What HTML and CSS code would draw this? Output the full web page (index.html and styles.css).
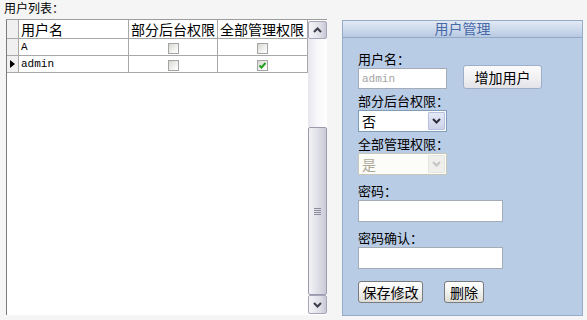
FILE: index.html
```html
<!DOCTYPE html>
<html lang="zh-CN">
<head>
    <meta charset="UTF-8">
    <title>用户管理</title>
    <link rel="stylesheet" href="styles.css">
</head>
<body>
    <div class="page">
        <div class="list-side">
            <div class="list-title">用户列表：</div>
            <div class="grid">
                <div class="grid-area">
                    <table class="grid-table">
                        <colgroup>
                            <col class="w-head">
                            <col class="w-name">
                            <col class="w-perm">
                            <col class="w-perm2">
                        </colgroup>
                        <tr class="head-row">
                            <th class="row-head"></th>
                            <th>用户名</th>
                            <th>部分后台权限</th>
                            <th>全部管理权限</th>
                        </tr>
                        <tr>
                            <td class="row-head"></td>
                            <td class="name">A</td>
                            <td class="check-cell"><span class="check"></span></td>
                            <td class="check-cell"><span class="check"></span></td>
                        </tr>
                        <tr>
                            <td class="row-head"><span class="pointer"></span></td>
                            <td class="name">admin</td>
                            <td class="check-cell"><span class="check"></span></td>
                            <td class="check-cell">
                                <span class="check">
                                    <svg width="9" height="9" viewBox="0 0 9 9"><path d="M1.5 4.5 L3.5 6.5 L7.5 2" fill="none" stroke="#22a022" stroke-width="2"/></svg>
                                </span>
                            </td>
                        </tr>
                    </table>
                </div>
                <div class="vscroll">
                    <div class="sb-btn sb-up">
                        <svg width="9" height="6" viewBox="0 0 9 6"><path d="M1 5 L4.5 1.5 L8 5" fill="none" stroke="#3c3c4c" stroke-width="2"/></svg>
                    </div>
                    <div class="sb-track"></div>
                    <div class="sb-thumb">
                        <span class="grip"></span>
                    </div>
                    <div class="sb-btn sb-down">
                        <svg width="9" height="6" viewBox="0 0 9 6"><path d="M1 1 L4.5 4.5 L8 1" fill="none" stroke="#3c3c4c" stroke-width="2"/></svg>
                    </div>
                </div>
            </div>
        </div>

        <div class="panel">
            <div class="panel-title">用户管理</div>
            <div class="panel-body">
                <div class="label first">用户名：</div>
                <div class="row-first">
                    <input type="text" class="text-input short" placeholder="admin">
                    <button class="btn btn-add">增加用户</button>
                </div>

                <div class="label gap-s">部分后台权限：</div>
                <div class="combo">
                    <span class="combo-text">否</span>
                    <span class="combo-btn">
                        <svg width="9" height="6" viewBox="0 0 9 6"><path d="M1 1 L4.5 4.5 L8 1" fill="none" stroke="#2c2c3c" stroke-width="2"/></svg>
                    </span>
                </div>

                <div class="label gap-s">全部管理权限：</div>
                <div class="combo disabled">
                    <span class="combo-text">是</span>
                    <span class="combo-btn">
                        <svg width="9" height="6" viewBox="0 0 9 6"><path d="M1 1 L4.5 4.5 L8 1" fill="none" stroke="#c4c4c4" stroke-width="2"/></svg>
                    </span>
                </div>

                <div class="label gap-m">密码：</div>
                <input type="password" class="text-input long">

                <div class="label gap-m">密码确认：</div>
                <input type="password" class="text-input long">

                <div class="actions">
                    <button class="btn btn-save">保存修改</button>
                    <button class="btn btn-del">删除</button>
                </div>
            </div>
        </div>
    </div>
</body>
</html>
```

FILE: styles.css
```css
* {
    margin: 0;
    padding: 0;
    box-sizing: border-box;
}

body {
    background-color: #f5f5f5;
    font-family: "Noto Sans CJK SC", "Liberation Sans", sans-serif;
    font-size: 12px;
    color: #000;
}

.page {
    display: flex;
    align-items: flex-start;
}

/* left: user list */
.list-side {
    padding-left: 6px;
}

.list-title {
    margin-left: -2px;
    height: 19px;
    line-height: 15px;
    font-size: 12px;
}

.grid {
    display: flex;
    width: 321px;
    height: 296px;
    border-left: 1px solid #7c7c7c;
    border-top: 1px solid #9c9c9c;
}

.grid-area {
    width: 301px;
    background-color: #fff;
}

.grid-table {
    border-collapse: separate;
    border-spacing: 0;
    table-layout: fixed;
    width: 301px;
}

.w-head { width: 12px; }
.w-name { width: 110px; }
.w-perm { width: 89px; }
.w-perm2 { width: 90px; }

.grid-table th,
.grid-table td {
    border-right: 1px solid #a8a8a8;
    border-bottom: 1px solid #a8a8a8;
    padding: 0 2px;
    text-align: left;
    white-space: nowrap;
    overflow: hidden;
}

.grid-table th {
    height: 19px;
    font-size: 14px;
    font-weight: normal;
    line-height: 17px;
    background-color: #fff;
}

.grid-table td {
    height: 17px;
    line-height: 16px;
}

.grid-table .row-head {
    background-color: #f0f0f0;
    padding: 0;
    position: relative;
}

.name {
    font-family: "Liberation Mono", monospace;
    font-size: 11px;
}

.check-cell {
    text-align: center !important;
}

.check {
    display: inline-block;
    width: 11px;
    height: 11px;
    vertical-align: middle;
    border: 1px solid #a4a4a4;
    background: linear-gradient(135deg, #d6d6d2 0%, #f2f2f0 60%, #ffffff 100%);
    line-height: 0;
}

.check svg {
    display: block;
}

.pointer {
    position: absolute;
    left: 3px;
    top: 4px;
    width: 0;
    height: 0;
    border-top: 4px solid transparent;
    border-bottom: 4px solid transparent;
    border-left: 5px solid #000;
}

/* scrollbar */
.vscroll {
    width: 19px;
    display: flex;
    flex-direction: column;
    background-color: #fff;
    padding-top: 1px;
}

.sb-btn {
    height: 18px;
    border: 1px solid #a6a6ba;
    border-radius: 2px;
    background: linear-gradient(90deg, #f4f4f8 0%, #dcdce6 70%, #c8c8d6 100%);
    display: flex;
    align-items: center;
    justify-content: center;
}

.sb-down {
    height: 19px;
}

.sb-track {
    height: 88px;
    background: linear-gradient(90deg, #e6e6ee 0%, #f8f8fb 50%, #ffffff 100%);
}

.sb-thumb {
    height: 168px;
    border: 1px solid #9a9aae;
    border-radius: 2px;
    background: linear-gradient(90deg, #f2f2f6 0%, #e4e4ec 40%, #cacad8 100%);
    display: flex;
    align-items: center;
    justify-content: center;
}

.grip {
    width: 7px;
    height: 7px;
    background: repeating-linear-gradient(180deg, #8a8a9c 0, #8a8a9c 1px, transparent 1px, transparent 2px);
}

/* right: user management panel */
.panel {
    margin-left: 15px;
    margin-top: 20px;
    width: 241px;
    height: 296px;
    background-color: #b9cce5;
    border: 1px solid #95abca;
}

.panel-title {
    height: 17px;
    line-height: 15px;
    text-align: center;
    font-size: 14px;
    color: #4769a8;
    background: linear-gradient(180deg, #e2e9f3 0%, #c9d7ea 60%, #b8c9e1 100%);
    border-bottom: 1px solid #93a9c8;
}

.panel-body {
    padding: 14px 0 0 15px;
}

.label {
    height: 14px;
    line-height: 14px;
    font-size: 13px;
    margin-bottom: 2px;
}

.label.first {
    margin-bottom: -1px;
}

.gap-s { margin-top: 5px; }
.gap-m { margin-top: 9px; }

.row-first {
    display: flex;
    align-items: flex-end;
}

.text-input {
    display: block;
    height: 21px;
    border: 1px solid #a5acb5;
    background-color: #fff;
    outline: none;
    padding: 0 3px;
}

.short {
    width: 89px;
    font-family: "Liberation Mono", monospace;
    font-size: 11px;
}

.short::placeholder {
    color: #a4a4a4;
}

.long {
    width: 145px;
    height: 22px;
}

.combo {
    display: flex;
    width: 89px;
    height: 22px;
    border: 1px solid #7f9db9;
    background-color: #fff;
    padding: 1px;
}

.combo-text {
    flex: 1;
    font-size: 14px;
    line-height: 18px;
    padding-left: 2px;
}

.combo-btn {
    width: 17px;
    border: 1px solid #b4c0dc;
    border-radius: 1px;
    background: linear-gradient(180deg, #e4e8f6 0%, #cdd3e8 100%);
    display: flex;
    align-items: center;
    justify-content: center;
}

.combo.disabled {
    border-color: #c9c7ba;
    background-color: #fcfcf9;
}

.combo.disabled .combo-text {
    color: #aca899;
}

.combo.disabled .combo-btn {
    border-color: #e4e4de;
    background: #efefec;
}

.btn {
    font-family: "Noto Sans CJK SC", sans-serif;
    font-size: 14px;
    line-height: 18px;
    color: #000;
    border: 1px solid #7a7a7a;
    border-radius: 3px;
    background: linear-gradient(180deg, #ffffff 0%, #f2f2f0 50%, #dcdcd8 100%);
    cursor: pointer;
}

.btn-add {
    margin-left: 16px;
    width: 79px;
    height: 24px;
    border-color: #9eaecb;
    background: linear-gradient(180deg, #fbfbfb 0%, #f0f0f2 60%, #e2e2e8 100%);
}

.actions {
    display: flex;
    gap: 21px;
    margin-top: 12px;
}

.btn-save {
    width: 65px;
    height: 22px;
}

.btn-del {
    width: 40px;
    height: 22px;
}
```
